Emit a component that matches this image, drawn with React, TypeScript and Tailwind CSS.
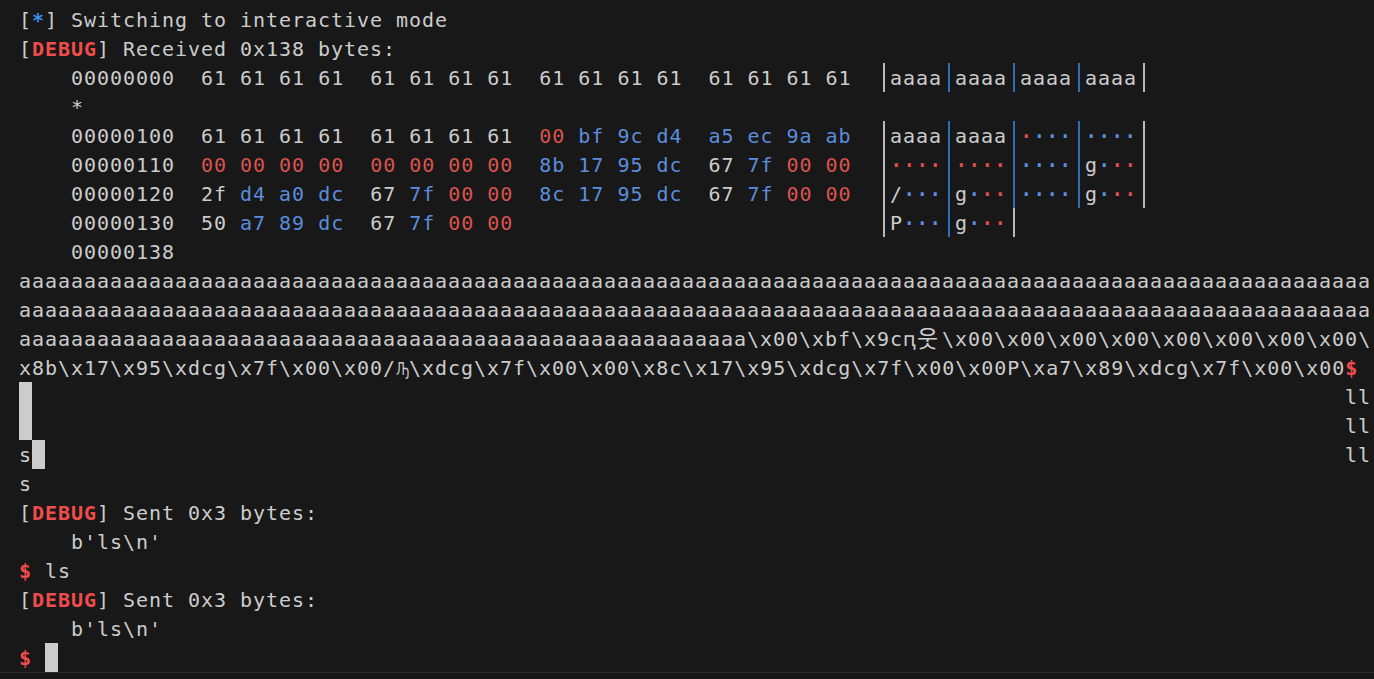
import type { ReactNode } from 'react';

const A104 = 'a'.repeat(104);
const X00 = '\\x00';

const dump = [
  { off: '00000000', bytes: Array(16).fill('61') },
  { star: true },
  { off: '00000100', bytes: '61 61 61 61 61 61 61 61 00 bf 9c d4 a5 ec 9a ab'.split(' ') },
  { off: '00000110', bytes: '00 00 00 00 00 00 00 00 8b 17 95 dc 67 7f 00 00'.split(' ') },
  { off: '00000120', bytes: '2f d4 a0 dc 67 7f 00 00 8c 17 95 dc 67 7f 00 00'.split(' ') },
  { off: '00000130', bytes: '50 a7 89 dc 67 7f 00 00'.split(' ') },
  { off: '00000138', bytes: [] },
];

function byteColor(b: string) {
  const n = parseInt(b, 16);
  if (n === 0) return 'text-[#d9534f]';
  if (n >= 0x20 && n < 0x7f) return '';
  return 'text-[#5b8ddd]';
}

// line-height is 2px over the row height so glyphs sit 1px lower, as in the terminal
function Row({ children }: { children?: ReactNode }) {
  return <div className="h-[29px] leading-[31px] whitespace-pre">{children}</div>;
}

// terminal cell sized block cursor
function Cursor() {
  return <span className="inline-block w-[13px] h-[29px] bg-[#cccccc] align-top" />;
}

function Bar({ blue }: { blue?: boolean }) {
  return (
    <span className="inline-block w-[13px] h-[29px] align-top">
      <span className={`block w-[2px] h-[29px] ml-[6px] ${blue ? 'bg-[#2f6db8]' : 'bg-[#b8b8b8]'}`} />
    </span>
  );
}

function Cell({ children }: { children: ReactNode }) {
  return <span className="inline-block w-[13px] h-[29px] align-top tracking-normal">{children}</span>;
}

function Debug() {
  return (
    <>
      [<span className="font-bold text-[#f14c4c]">DEBUG</span>]
    </>
  );
}

function Prompt() {
  return <span className="font-bold text-[#f14c4c]">$</span>;
}

function HexRow({ off, bytes }: { off: string; bytes: string[] }) {
  const groups: string[][] = [];
  for (let i = 0; i < bytes.length; i += 4) groups.push(bytes.slice(i, i + 4));
  return (
    <Row>
      {'    '}
      {off}
      {'  '}
      <span className="inline-block w-[676px] align-top">
        {groups.map((g, gi) => (
          <span key={gi}>
            {g.map((b, i) => (
              <span key={i}>
                <span className={byteColor(b)}>{b}</span>{' '}
              </span>
            ))}{' '}
          </span>
        ))}
      </span>
      {groups.length > 0 && <Bar />}
      {groups.map((g, gi) => (
        <span key={gi}>
          {g.map((b, i) => {
            const n = parseInt(b, 16);
            const printable = n >= 0x20 && n < 0x7f;
            return (
              <Cell key={i}>
                {printable ? (
                  String.fromCharCode(n)
                ) : (
                  <span className={`-ml-[1px] text-[24px] align-[-2px] ${n === 0 ? 'text-[#e5504c]' : 'text-[#5b8fe6]'}`}>·</span>
                )}
              </Cell>
            );
          })}
          <Bar blue={gi < groups.length - 1} />
        </span>
      ))}
    </Row>
  );
}

export default function App() {
  return (
    <div className="h-[679px] overflow-hidden bg-[#181818]">
      <div className="h-[673px] border-b border-[#2b2b2b] pt-[5px] pl-[19px] font-['DejaVu_Sans_Mono','Noto_Sans_CJK_KR',monospace] text-[20px] tracking-[0.96px] text-[#cccccc]">
        <Row>
          [<span className="font-bold text-[#3b8eea]">*</span>] Switching to interactive mode
        </Row>
        <Row>
          <Debug /> Received 0x138 bytes:
        </Row>
        {dump.map((d, i) =>
          d.star ? <Row key={i}>{'    *'}</Row> : <HexRow key={i} off={d.off!} bytes={d.bytes!} />,
        )}
        <Row>{A104}</Row>
        <Row>{A104}</Row>
        <Row>
          {'a'.repeat(56)}
          {X00}\xbf\x9c
          <Cell>ԥ</Cell>
          <span className="inline-block w-[26px] h-[29px] align-top tracking-normal text-[23px] pl-[1px]">웃</span>
          {X00.repeat(8)}\
        </Row>
        <Row>
          x8b\x17\x95\xdcg\x7f{X00}{X00}/
          <Cell>
            <span className="inline-block origin-left scale-x-[0.7] font-['DejaVu_Sans',sans-serif] text-[17px]">Ԡ</span>
          </Cell>
          \xdcg\x7f{X00}{X00}\x8c\x17\x95\xdcg\x7f{X00}{X00}P\xa7\x89\xdcg\x7f{X00}{X00}
          <Prompt />
        </Row>
        <div className="pr-[3px]">
          <Row>
            <div className="flex justify-between">
              <Cursor />
              <span>ll</span>
            </div>
          </Row>
          <Row>
            <div className="flex justify-between">
              <Cursor />
              <span>ll</span>
            </div>
          </Row>
          <Row>
            <div className="flex justify-between">
              <span>
                s
                <Cursor />
              </span>
              <span>ll</span>
            </div>
          </Row>
        </div>
        <Row>s</Row>
        <Row>
          <Debug /> Sent 0x3 bytes:
        </Row>
        <Row>{"    b'ls\\n'"}</Row>
        <Row>
          <Prompt /> ls
        </Row>
        <Row>
          <Debug /> Sent 0x3 bytes:
        </Row>
        <Row>{"    b'ls\\n'"}</Row>
        <Row>
          <Prompt /> <Cursor />
        </Row>
      </div>
    </div>
  );
}
